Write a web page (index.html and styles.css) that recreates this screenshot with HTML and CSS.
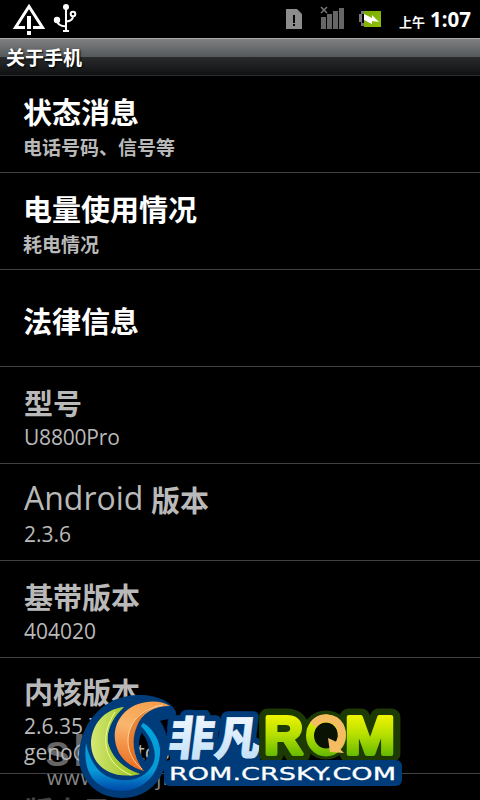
FILE: index.html
```html
<!DOCTYPE html>
<html lang="zh-CN">
<head>
  <meta charset="UTF-8" />
  <meta name="viewport" content="width=device-width, initial-scale=1" />
  <title>关于手机</title>
  <link rel="stylesheet" href="styles.css">
</head>
<body>
  <div class="phone">
    <div class="status-bar">
      <svg class="status-left" width="90" height="38" viewBox="0 0 90 38">
        <path d="M25 27.500H15.500L29 6.500L42.500 27.500H33" fill="none" stroke="#fff" stroke-width="3"/>
        <path d="M27 16h4v13h-4zM27 31h4v4h-4z" fill="#fff"/>
        <g fill="none" stroke="#fff" stroke-width="2">
          <path d="M66 7V30M57 20q0 6 9 6.500M73 16q0 5-7 5.500"/>
          <circle cx="73" cy="14" r="2.300"/>
        </g>
        <circle cx="66" cy="7" r="3" fill="#fff"/>
        <circle cx="57" cy="20" r="3.200" fill="#fff"/>
        <path d="M63 30h6v2h-6z" fill="#fff"/>
      </svg>
      <svg class="status-right" width="102" height="38" viewBox="282 0 102 38">
        <path d="M286 9h11l5 5v15h-16z" fill="#8c8c8c"/>
        <path d="M293 15h2v8h-2zM293 24h2v2h-2z" fill="#000"/>
        <path d="M321 7l6 6M327 7l-6 6" stroke="#777" stroke-width="1.500"/>
        <path d="M321 17h5v12h-5zM327 14h5v15h-5zM333 11h5v18h-5zM339 8h5v21h-5z" fill="#666"/>
        <path d="M364 11h-3v3h-2v8h2v4h3v-3h-2v-9h2z" fill="#777"/>
        <path d="M364 11h17v16h-17z" fill="url(#battery)"/>
        <path d="M364 14l8 4v-3l7 7-7-1v3l-8-4z" fill="#fff"/>
        <defs>
          <linearGradient id="battery" x2="1" y2="1">
            <stop offset="0" stop-color="#76a800"/>
            <stop offset="1" stop-color="#90c008"/>
          </linearGradient>
        </defs>
      </svg>
      <div class="clock"><span class="ampm">上午</span>1:07</div>
    </div>

    <div class="title-bar">关于手机</div>

    <svg class="watermark" width="380" height="110" viewBox="40 690 380 110">
      <text class="mark-big" x="45" y="766">sh</text>
      <text class="mark-url" x="47" y="785" textLength="172">www.shouji.com</text>
    </svg>

    <div class="list">
      <div class="item">
        <div class="name">状态消息</div>
        <div class="summary">电话号码、信号等</div>
      </div>
      <div class="item">
        <div class="name">电量使用情况</div>
        <div class="summary">耗电情况</div>
      </div>
      <div class="item single">
        <div class="name">法律信息</div>
      </div>
      <div class="item disabled">
        <div class="name">型号</div>
        <div class="value model">U8800Pro</div>
      </div>
      <div class="item disabled">
        <div class="name"><span class="latin">Android</span>版本</div>
        <div class="value">2.3.6</div>
      </div>
      <div class="item disabled">
        <div class="name">基带版本</div>
        <div class="value">404020</div>
      </div>
      <div class="item disabled kernel">
        <div class="name">内核版本</div>
        <div class="value">2.6.35.7<br>geno@desktop</div>
      </div>
      <div class="item disabled last">
        <div class="name">版本号</div>
      </div>
    </div>

    <svg class="watermark" width="380" height="110" viewBox="40 690 380 110">
      <defs>
        <linearGradient id="ring" x2="0" y2="1">
          <stop offset="0" stop-color="#00a4dc"/>
          <stop offset=".7" stop-color="#0798d7"/>
          <stop offset="1" stop-color="#0048a8"/>
        </linearGradient>
        <linearGradient id="lime" x1="0" x2="1">
          <stop offset="0" stop-color="#d5e873"/>
          <stop offset="1" stop-color="#91bd18"/>
        </linearGradient>
        <linearGradient id="orange" x1=".6" y1="0" x2=".4" y2="1">
          <stop offset="0" stop-color="#f6a04c"/>
          <stop offset=".4" stop-color="#f9b66f"/>
          <stop offset="1" stop-color="#ed6b1d"/>
        </linearGradient>
        <linearGradient id="ice" x2="0" y2="1">
          <stop offset="0" stop-color="#fff"/>
          <stop offset="1" stop-color="#b9dcf8"/>
        </linearGradient>
        <linearGradient id="green" gradientUnits="userSpaceOnUse" x1="0" y1="714" x2="0" y2="756">
          <stop offset="0" stop-color="#f2f500"/>
          <stop offset=".5" stop-color="#b5df00"/>
          <stop offset="1" stop-color="#65b900"/>
        </linearGradient>
      </defs>

      <!-- blue lettering -->
      <g stroke="#003c79" stroke-width="12" stroke-linejoin="round" fill="#003c79">
        <text class="brand" transform="translate(167 755) skewX(-7)" textLength="92" lengthAdjust="spacingAndGlyphs">非凡</text>
        <path d="M176 750h76v15h-76z"/>
      </g>

      <!-- round emblem -->
      <path fill-rule="evenodd" d="M79 757C79 725 102 696 137 695C156 694 171 702 175 710C180 719 167 719 160 721C168 732 169 746 167 759C163 781 147 798 122 798C96 798 79 779 79 757ZM142 733C137 741 138 752 145 761C151 754 150 743 142 733Z" fill="#003c79"/>
      <path d="M86 743C82 777 98 790 121 791C146 791 161 771 160 749C159 738 151 727 143 723L141 726C152 738 158 752 153 764C146 778 130 783 115 779C100 776 90 763 86 743Z" fill="url(#ring)"/>
      <path d="M124 707C104 709 91 725 91 744C92 768 113 780 140 774C124 769 112 758 108 743C106 729 114 716 124 707Z" fill="url(#lime)"/>
      <path d="M117 709C98 735 105 764 131 776L140 774C124 769 112 758 108 743C106 729 114 716 124 707Z" fill="#a9cd2c" opacity=".6"/>
      <path d="M115 712C98 739 105 764 131 775" fill="none" stroke="#effaa6" stroke-width="1"/>
      <path d="M170 706C158 698 137 701 126 711C113 723 112 739 119 753C125 763 134 768 144 771C135 760 130 744 136 728C141 713 154 706 170 706Z" fill="url(#orange)"/>
      <path d="M158 706C139 709 126 726 129 748C131 758 137 766 142 770C134 758 131 741 137 727C141 715 149 708 158 706Z" fill="#d96516" opacity=".6"/>
      <path d="M163 705C137 709 124 729 129 749C131 758 137 765 142 769" fill="none" stroke="#ffd09b" stroke-width="1"/>

      <text class="brand" fill="url(#ice)" stroke="#e9f5ff" stroke-width=".5" transform="translate(167 755) skewX(-7)" textLength="92" lengthAdjust="spacingAndGlyphs">非凡</text>

      <!-- green lettering -->
      <g class="rom" fill="#1d3904" stroke="#1d3904" stroke-width="17" stroke-linejoin="round">
        <text x="264" y="753.500" textLength="39" lengthAdjust="spacingAndGlyphs">R</text>
        <circle cx="326" cy="735" r="16"/>
        <text x="345" y="753.500" textLength="50" lengthAdjust="spacingAndGlyphs">M</text>
      </g>
      <rect x="164" y="760" width="238" height="26" rx="6" fill="#003c79"/>
      <g class="rom" fill="url(#green)" stroke="url(#green)" stroke-width="4" stroke-linejoin="round">
        <text x="264" y="753.500" textLength="39" lengthAdjust="spacingAndGlyphs">R</text>
        <text x="345" y="753.500" textLength="50" lengthAdjust="spacingAndGlyphs">M</text>
      </g>
      <ellipse cx="326" cy="735.500" rx="16" ry="17" fill="#0a1303" stroke="url(#green)" stroke-width="8"/>
      <path d="M313 725C321 715 335 717 340 726C344 735 341 743 336 748" fill="none" stroke="#f5bd62" stroke-width="8"/>
      <path d="M328 738l2 14 14 1-5-5 2-4z" fill="#f5bd62"/>
      <text class="site" x="169" y="779.500" textLength="227" lengthAdjust="spacingAndGlyphs">ROM.CRSKY.COM</text>
    </svg>
  </div>
</body>
</html>
```

FILE: styles.css
```css
body {
  margin: 0;
  background: #000;
  color: #fff;
  font-family: 'Noto Sans', 'Noto Sans CJK SC', sans-serif;
}

.phone {
  position: relative;
  width: 480px;
  height: 800px;
  overflow: hidden;
}

.status-bar {
  display: flex;
  height: 38px;
}

.status-right {
  margin-left: 192px;
}

.clock {
  flex: 1;
  padding-right: 9px;
  text-align: right;
  font-size: 20.5px;
  font-weight: bold;
  line-height: 39px;
  white-space: nowrap;
}

.ampm {
  margin-right: 5px;
  font-size: 13px;
}

.title-bar {
  box-sizing: border-box;
  height: 38px;
  padding-left: 6px;
  border-top: 1px solid #aaa;
  border-bottom: 1px solid #292b2c;
  background: linear-gradient(#7e8081, #55585a 50%, #292b2c 50%, #101112);
  font-family: 'Noto Sans CJK SC', sans-serif;
  font-size: 19px;
  font-weight: bold;
  line-height: 36px;
  text-shadow: 1px 1px 2px #000;
}

.list {
  position: relative;
}

.item {
  box-sizing: border-box;
  height: 97px;
  padding: 14px 0 0 23px;
  border-bottom: 1px solid #424242;
}

.name {
  height: 43px;
  font-family: 'Noto Sans CJK SC', sans-serif;
  font-size: 29px;
  font-weight: bold;
  line-height: 42px;
  white-space: nowrap;
}

.summary {
  font-family: 'Noto Sans CJK SC', sans-serif;
  font-size: 19px;
  font-weight: bold;
  line-height: 28px;
  color: #b9b9b9;
}

.single {
  padding-top: 29px;
}

.disabled {
  padding-left: 24px;
  color: #b9b9b9;
}

.latin {
  display: inline-block;
  width: 127px;
  font-family: 'Open Sans', sans-serif;
  font-size: 32px;
  font-weight: normal;
  line-height: 38px;
  position: relative;
  top: -2px;
}

.value {
  font-family: 'Open Sans', sans-serif;
  font-size: 21px;
  line-height: 26px;
}

.model {
  letter-spacing: -0.2px;
}

.kernel {
  height: 116px;
  padding-top: 12px;
}

.last {
  padding-top: 15px;
  color: #444;
}

.watermark {
  position: absolute;
  left: 40px;
  top: 690px;
}

.mark-big {
  font: bold 45px 'Liberation Sans', sans-serif;
  letter-spacing: 3px;
  fill: #666;
}

.mark-url {
  font: 20px 'Open Sans', sans-serif;
  fill: #888;
}

.brand {
  font: 900 46px 'Noto Sans CJK SC', sans-serif;
}

.rom {
  font: bold 54px 'Liberation Sans', sans-serif;
}

.site {
  font: 18.5px 'DejaVu Sans', sans-serif;
  fill: #fff;
  stroke: #fff;
  stroke-width: 0.3px;
}
```
